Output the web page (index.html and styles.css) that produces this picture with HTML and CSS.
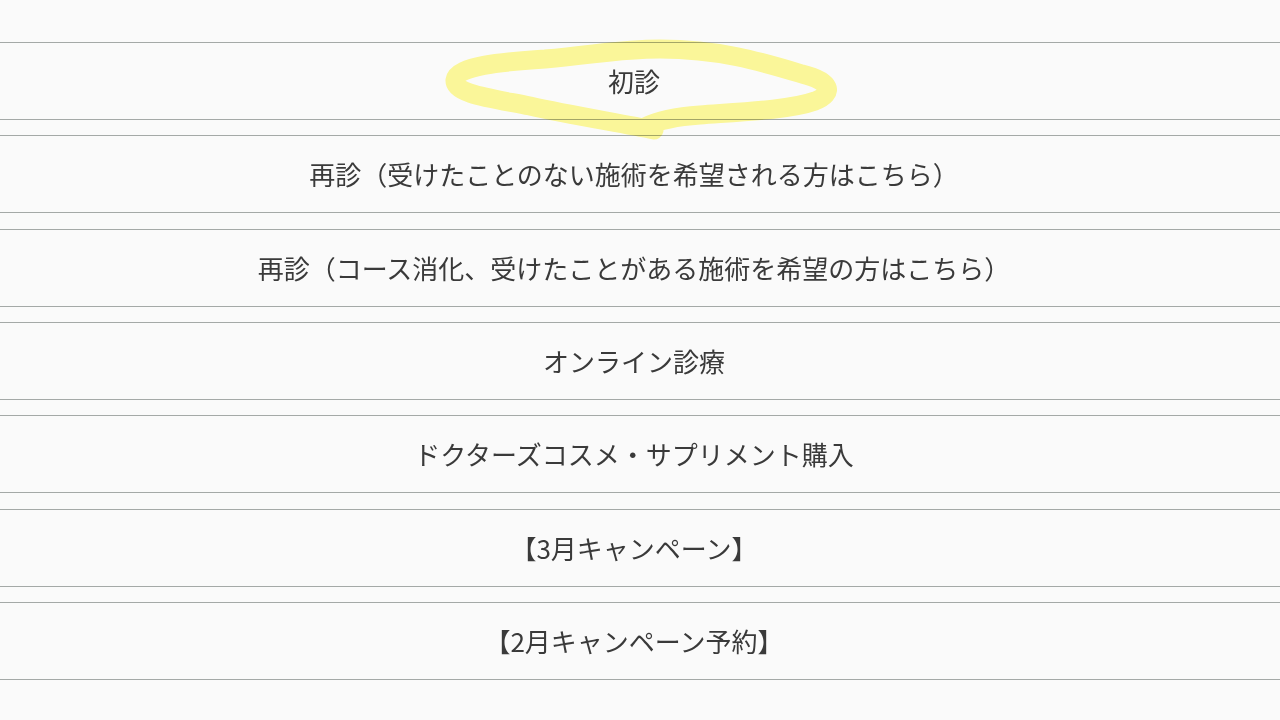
FILE: index.html
```html
<!DOCTYPE html>
<html lang="ja">
<head>
<meta charset="utf-8">
<title>予約メニュー</title>
<link rel="stylesheet" href="styles.css">
</head>
<body>
<main class="menu">
  <a class="menu-item" href="#">初診</a>
  <a class="menu-item" href="#">再診（受けたことのない施術を希望される方はこちら）</a>
  <a class="menu-item" href="#">再診（コース消化、受けたことがある施術を希望の方はこちら）</a>
  <a class="menu-item" href="#">オンライン診療</a>
  <a class="menu-item" href="#">ドクターズコスメ・サプリメント購入</a>
  <a class="menu-item" href="#">【3月キャンペーン】</a>
  <a class="menu-item" href="#">【2月キャンペーン予約】</a>
</main>
<svg class="highlight" width="1280" height="720" viewBox="0 0 1280 720" aria-hidden="true">
  <path d="M 654 130 C 620 123, 570 115, 530 106 C 490 98, 454 94, 455 80 C 457 66, 500 62, 545 59 C 600 54, 620 49, 660 49 C 720 49, 762 62, 802 74 C 831 81, 835 93, 815 101 C 790 110, 740 112, 700 115 C 670 117, 655 122, 645 127" fill="none" stroke="#fffb9c" stroke-width="19" stroke-linecap="round" stroke-linejoin="round"/>
</svg>
</body>
</html>
```
FILE: styles.css
```css
html, body {
  margin: 0;
  padding: 0;
  background: #fafafa;
}
body {
  font-family: "Noto Sans CJK JP", "Noto Sans", sans-serif;
  color: #3a3a3a;
  width: 1280px;
  height: 720px;
  overflow: hidden;
  position: relative;
}
.menu {
  display: flex;
  flex-direction: column;
  gap: 15.33px;
  padding-top: 42px;
}
.menu-item {
  box-sizing: border-box;
  height: 78px;
  display: flex;
  align-items: center;
  justify-content: center;
  padding-right: 12px;
  border-top: 1px solid #a4a9a7;
  border-bottom: 1px solid #a4a9a7;
  font-size: 26px;
  color: #3a3a3a;
  text-decoration: none;
  line-height: 1;
}
.highlight {
  position: absolute;
  left: 0;
  top: 0;
  pointer-events: none;
  mix-blend-mode: multiply;
}
```
